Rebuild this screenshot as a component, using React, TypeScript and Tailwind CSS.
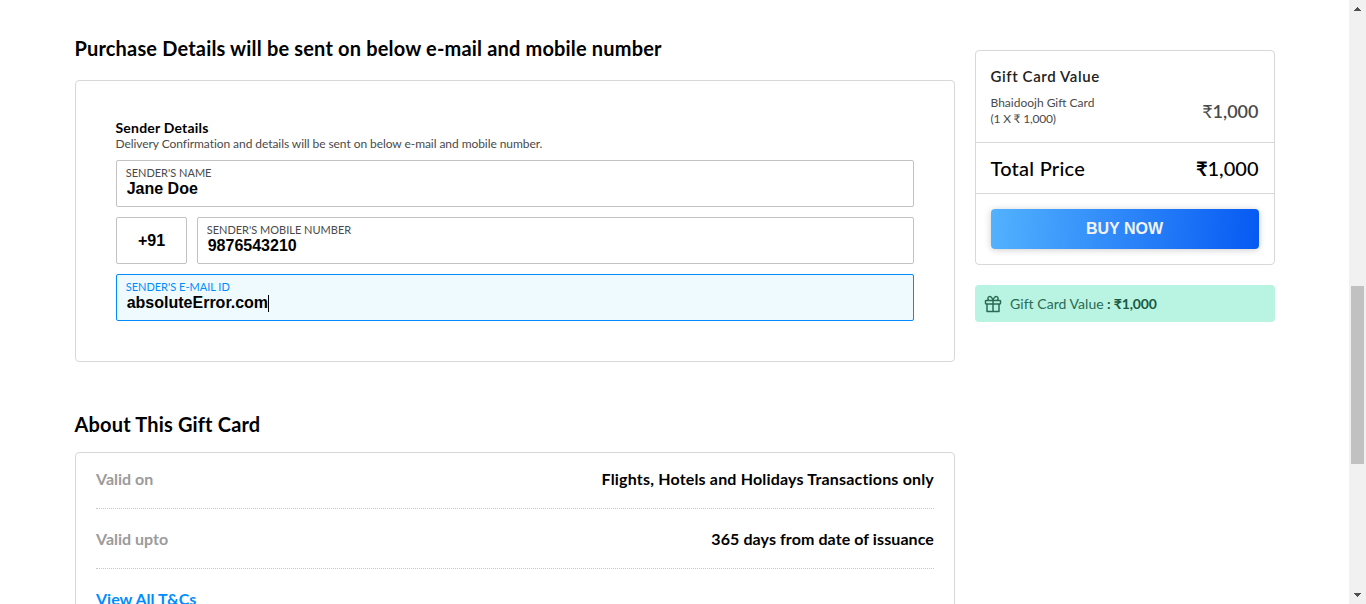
import type { ReactNode } from "react";

function Field({ label, value, active = false }: { label: string; value: string; active?: boolean }) {
  return (
    <div
      className={`h-[47px] flex-1 rounded-[2px] border pt-[5px] pl-[8.7px] ${
        active ? "border-[#008cff] bg-[#effaff]" : "border-[#c2c2c2] bg-white"
      }`}
    >
      <div
        className={`h-[14px] text-[11px] leading-[14px] whitespace-nowrap ${
          active ? "text-[#008cff]" : "text-[#4a4a4a]"
        }`}
      >
        {label}
      </div>
      <div className="flex h-[18px] items-center pl-px font-['Liberation_Sans',sans-serif] text-[16px] leading-[18px] font-bold whitespace-nowrap text-black">
        <span>{value}</span>
        {active && <span className="h-[17px] w-px bg-black" />}
      </div>
    </div>
  );
}

function InfoRow({ label, value }: { label: string; value: ReactNode }) {
  return (
    <div className="flex h-[60px] items-center justify-between border-b border-dotted border-[#c8c8c8] text-[16px] leading-5 font-bold whitespace-nowrap">
      <span className="text-[#9b9b9b]">{label}</span>
      <span className="text-black">{value}</span>
    </div>
  );
}

function Heading({ children }: { children: ReactNode }) {
  return (
    <h2 className="-ml-[0.5px] h-6 text-[20px] leading-6 font-bold tracking-[0.17px] whitespace-nowrap text-black">
      {children}
    </h2>
  );
}

function GiftIcon() {
  return (
    <svg className="h-[18px] w-[18px]" viewBox="0 0 18 18" fill="none" stroke="#2b6b55" strokeWidth="1.5" strokeLinejoin="round">
      <rect x="1.5" y="5.5" width="15" height="3.4" rx="0.6" />
      <path d="M3 8.9V16.4H15V8.9M9 5.5V16.4" />
      <path d="M9 5.2C8.2 2.4 6.6 1.2 5.2 1.6C3.6 2.1 3.5 4.2 4.8 5.2M9 5.2C9.8 2.4 11.4 1.2 12.8 1.6C14.4 2.1 14.5 4.2 13.2 5.2" />
    </svg>
  );
}

function Scrollbar() {
  return (
    <div className="flex h-full w-[17px] flex-col items-center bg-[#f1f1f1]">
      <svg className="mt-[7px] h-1 w-[7px]" viewBox="0 0 7 4" shapeRendering="crispEdges" fill="#505050">
        <path d="M3 0h1v1h1v1h1v1h1v1H0V3h1V2h1V1h1z" />
      </svg>
      <div className="mt-[275px] h-[178px] w-[13px] bg-[#c1c1c1]" />
      <svg className="mt-[129px] h-1 w-[7px]" viewBox="0 0 7 4" shapeRendering="crispEdges" fill="#505050">
        <path d="M0 0h7v1H6v1H5v1H4v1H3V3H2V2H1V1H0z" />
      </svg>
    </div>
  );
}

export default function App() {
  return (
    <div className="flex h-[604px] w-[1366px] overflow-hidden bg-white font-['Lato',sans-serif]">
      <div className="flex flex-1 items-start gap-5 pl-[75px]">
        <main className="w-[880px] pt-9">
          <Heading>Purchase Details will be sent on below e-mail and mobile number</Heading>
          <section className="mt-5 h-[282px] rounded-[4px] border border-[#d8d8d8] px-10 pt-[38px]">
            <h3 className="-ml-[0.5px] h-[17px] text-[14px] leading-[17px] font-bold tracking-[0.2px] text-black">Sender Details</h3>
            <p className="-ml-[0.5px] h-[15px] text-[12px] leading-[15px] tracking-[-0.065px] whitespace-nowrap text-[#4a4a4a]">
              Delivery Confirmation and details will be sent on below e-mail and mobile number.
            </p>
            <div className="mt-[9px] flex flex-col gap-[10px]">
              <div className="flex">
                <Field label="SENDER'S NAME" value="Jane Doe" />
              </div>
              <div className="flex gap-[10px]">
                <div className="flex h-[47px] w-[71px] items-center justify-center rounded-[2px] border border-[#c2c2c2] font-['Liberation_Sans',sans-serif] text-[16px] font-bold text-black">
                  +91
                </div>
                <Field label="SENDER'S MOBILE NUMBER" value="9876543210" />
              </div>
              <div className="flex">
                <Field label="SENDER'S E-MAIL ID" value="absoluteError.com" active />
              </div>
            </div>
          </section>
          <div className="mt-[50px]">
            <Heading>About This Gift Card</Heading>
          </div>
          <section className="mt-4 h-[200px] rounded-[4px] border border-[#d8d8d8] px-5">
            <div className="-mt-1">
              <InfoRow
                label="Valid on"
                value={<span className="tracking-[0.18px]">Flights, Hotels and Holidays Transactions only</span>}
              />
              <InfoRow
                label="Valid upto"
                value={<span className="tracking-[0.09px]">365 days from date of issuance</span>}
              />
            </div>
            <a className="mt-5 block text-[16px] leading-5 font-bold text-[#008cff]">View All T&amp;Cs</a>
          </section>
        </main>
        <aside className="w-[300px] pt-[50px]">
          <section className="h-[215px] rounded-[4px] border border-[#d8d8d8]">
            <div className="h-[92px] border-b border-[#d8d8d8] pt-[15px] pr-[15.5px] pl-[14.5px] whitespace-nowrap">
              <div className="h-5 text-[15px] leading-5 font-semibold tracking-[0.6px] text-[#222]">Gift Card Value</div>
              <div className="mt-[9px] flex items-center justify-between">
                <div className="text-[12px] leading-4 text-[#4a4a4a]">
                  <div>Bhaidoojh Gift Card</div>
                  <div className="tracking-[-0.2px]">(1 X ₹ 1,000)</div>
                </div>
                <div className="text-[18px] leading-6 text-[#4a4a4a]">
                  ₹<span className="font-semibold">1,000</span>
                </div>
              </div>
            </div>
            <div className="flex h-[51px] items-center justify-between border-b border-[#d8d8d8] pr-[15.5px] pl-[14.5px] text-[20px] leading-6 font-medium text-black">
              <span className="tracking-[0.25px]">Total Price</span>
              <span>
                <span className="font-bold">₹</span>1,000
              </span>
            </div>
            <div className="px-[15px] pt-[15px]">
              <button className="flex h-10 w-full items-center justify-center rounded-[4px] bg-[linear-gradient(93deg,#53b2fe,#065af3)] pr-px font-['Liberation_Sans',sans-serif] text-[16px] font-bold text-[#f2f2f2] shadow-[0_1px_7px_0_rgba(0,0,0,0.2)]">
                BUY NOW
              </button>
            </div>
          </section>
          <div className="mt-5 flex h-[37px] items-center rounded-[4px] bg-[#b8f4e1] pl-[9px] text-[14px] whitespace-nowrap text-[#2b6b55]">
            <GiftIcon />
            <span className="ml-2 tracking-[0.05px]">
              Gift Card Value<b className="font-bold tracking-[-0.15px] text-[#1a5a44]"> : ₹1,000</b>
            </span>
          </div>
        </aside>
      </div>
      <Scrollbar />
    </div>
  );
}
